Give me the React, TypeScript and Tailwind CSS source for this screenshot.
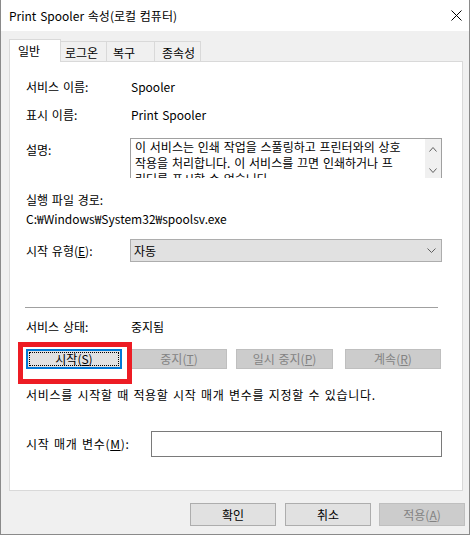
import React from "react";

const FONT = { fontFamily: '"Noto Sans CJK KR", "Noto Sans", sans-serif' };

const Chevron = ({ up = false, w = 8, h = 5 }: { up?: boolean; w?: number; h?: number }) => (
  <svg width={w} height={h} viewBox={`0 0 ${w} ${h}`} className="block">
    <polyline
      points={up ? `0.5,${h - 0.5} ${w / 2},0.5 ${w - 0.5},${h - 0.5}` : `0.5,0.5 ${w / 2},${h - 0.5} ${w - 0.5},0.5`}
      fill="none"
      stroke="#5f5f5f"
      strokeWidth="1"
    />
  </svg>
);

const Btn = ({
  children,
  disabled = false,
  className = "",
}: {
  children: React.ReactNode;
  disabled?: boolean;
  className?: string;
}) => (
  <div
    className={`h-[20px] w-[96px] flex items-center justify-center border text-[12px] leading-[16px] ${
      disabled ? "bg-[#cccccc] border-[#bfbfbf] text-[#838383]" : "bg-[#e1e1e1] border-[#adadad] text-black"
    } ${className}`}
  >
    {children}
  </div>
);

export default function App() {
  return (
    <div className="w-[472px] h-[535px] bg-white text-black [word-spacing:1.1px]" style={FONT}>
      <div className="w-[470px] h-[535px] bg-[#f0f0f0] border-l border-r border-b border-[#8a8a8a] flex flex-col">
        {/* title bar */}
        <div className="h-[31px] bg-white flex items-center justify-between pl-[8px] pr-[7px] shrink-0">
          <span className="text-[12px] leading-[16px]">Print Spooler 속성(로컬 컴퓨터)</span>
          <svg width="11" height="11" viewBox="0 0 11 11" className="block">
            <path d="M0.5 0.5 L10.5 10.5 M10.5 0.5 L0.5 10.5" stroke="#000" strokeWidth="1" />
          </svg>
        </div>

        {/* tabs */}
        <div className="h-[30px] pl-[8px] flex items-end shrink-0 text-[12px] leading-[16px]">
          <div className="relative z-10 -mb-px h-[23px] w-[52px] bg-white border-l border-r border-t border-[#d9d9d9] pl-[8px] pt-[3px]">
            일반
          </div>
          <div className="h-[20px] w-[46px] border-t border-r border-[#d9d9d9] pl-[4px] pt-[3px]">로그온</div>
          <div className="h-[20px] w-[48px] border-t border-r border-[#d9d9d9] pl-[6px] pt-[3px]">복구</div>
          <div className="h-[20px] w-[46px] border-t border-r border-[#d9d9d9] pl-[7px] pt-[3px]">종속성</div>
        </div>

        {/* panel */}
        <div className="ml-[8px] w-[454px] h-[430px] shrink-0 bg-white border border-[#d9d9d9] pl-[16px] pt-[17px] text-[12px] leading-[16px]">
          <div className="flex h-[16px]">
            <span className="w-[105px]">서비스 이름:</span>
            <span>Spooler</span>
          </div>
          <div className="flex h-[16px] mt-[12px]">
            <span className="w-[105px]">표시 이름:</span>
            <span>Print Spooler</span>
          </div>

          <div className="flex mt-[15px] h-[40px]">
            <span className="w-[104px] mt-[4px]">설명:</span>
            <div className="w-[312px] h-[40px] border-t border-l border-r border-[#a0a0a0] flex overflow-hidden">
              <div className="flex-1 pl-[4px] text-[12px] leading-[16px] whitespace-nowrap overflow-hidden">
                <div>이 서비스는 인쇄 작업을 스풀링하고 프린터와의 상호</div>
                <div>작용을 처리합니다. 이 서비스를 끄면 인쇄하거나 프</div>
                <div>린터를 표시할 수 없습니다.</div>
              </div>
              <div className="w-[16px] bg-[#f0f0f0] flex flex-col items-center pt-[8px]">
                <Chevron up w={8} h={5} />
                <div className="mt-[16px]">
                  <Chevron w={8} h={5} />
                </div>
              </div>
            </div>
          </div>

          <div className="h-[16px] mt-[14px]">실행 파일 경로:</div>
          <div className="h-[16px] mt-[3px]">C:₩Windows₩System32₩spoolsv.exe</div>

          <div className="flex items-center mt-[12px] h-[23px]">
            <span className="w-[104px]">
              시작 유형(<span className="underline">E</span>):
            </span>
            <div className="w-[312px] h-[23px] bg-[#e1e1e1] border border-[#adadad] flex items-center justify-between pl-[3px] pr-[5px]">
              <span>자동</span>
              <Chevron w={9} h={5} />
            </div>
          </div>

          <div className="mt-[45px] -ml-px w-[413px] h-px bg-[#a0a0a0]" />

          <div className="flex h-[16px] mt-[11px]">
            <span className="w-[105px]">서비스 상태:</span>
            <span>중지됨</span>
          </div>

          <div className="flex mt-[14px]">
            <div className="relative">
              <div className="h-[20px] w-[96px] bg-[#e1e1e1] border-2 border-[#0078d7] p-px">
                <div className="h-full w-full border border-dotted border-black flex items-center justify-center">
                  시작(<span className="underline">S</span>)
                </div>
              </div>
              <div className="absolute left-[-8px] top-[-7px] w-[114px] h-[42px] border-[5px] border-[#ed1c24]" />
            </div>
            <Btn disabled className="ml-[9px]">
              중지(<span className="underline">T</span>)
            </Btn>
            <Btn disabled className="ml-[9px] w-[97px]">
              일시 중지(<span className="underline">P</span>)
            </Btn>
            <Btn disabled className="ml-[12px]">
              계속(<span className="underline">R</span>)
            </Btn>
          </div>

          <div className="h-[16px] mt-[18px] tracking-[0.7px] whitespace-nowrap">
            서비스를 시작할 때 적용할 시작 매개 변수를 지정할 수 있습니다.
          </div>

          <div className="flex items-center mt-[28px] h-[26px]">
            <span className="w-[125px] tracking-[0.7px] whitespace-nowrap">
              시작 매개 변수(<span className="underline">M</span>):
            </span>
            <div className="w-[291px] h-[26px] bg-white border border-[#7a7a7a]" />
          </div>
        </div>

        {/* bottom buttons */}
        <div className="flex mt-[12px] pl-[189px] text-[12px] leading-[16px]">
          <div className="h-[23px] w-[86px] flex items-center justify-center bg-[#e1e1e1] border border-[#adadad]">확인</div>
          <div className="ml-[9px] h-[23px] w-[86px] flex items-center justify-center bg-[#e1e1e1] border border-[#adadad]">취소</div>
          <div className="ml-[8px] h-[23px] w-[86px] flex items-center justify-center bg-[#cccccc] border border-[#bfbfbf] text-[#838383]">
            적용(<span className="underline">A</span>)
          </div>
        </div>
      </div>
    </div>
  );
}
